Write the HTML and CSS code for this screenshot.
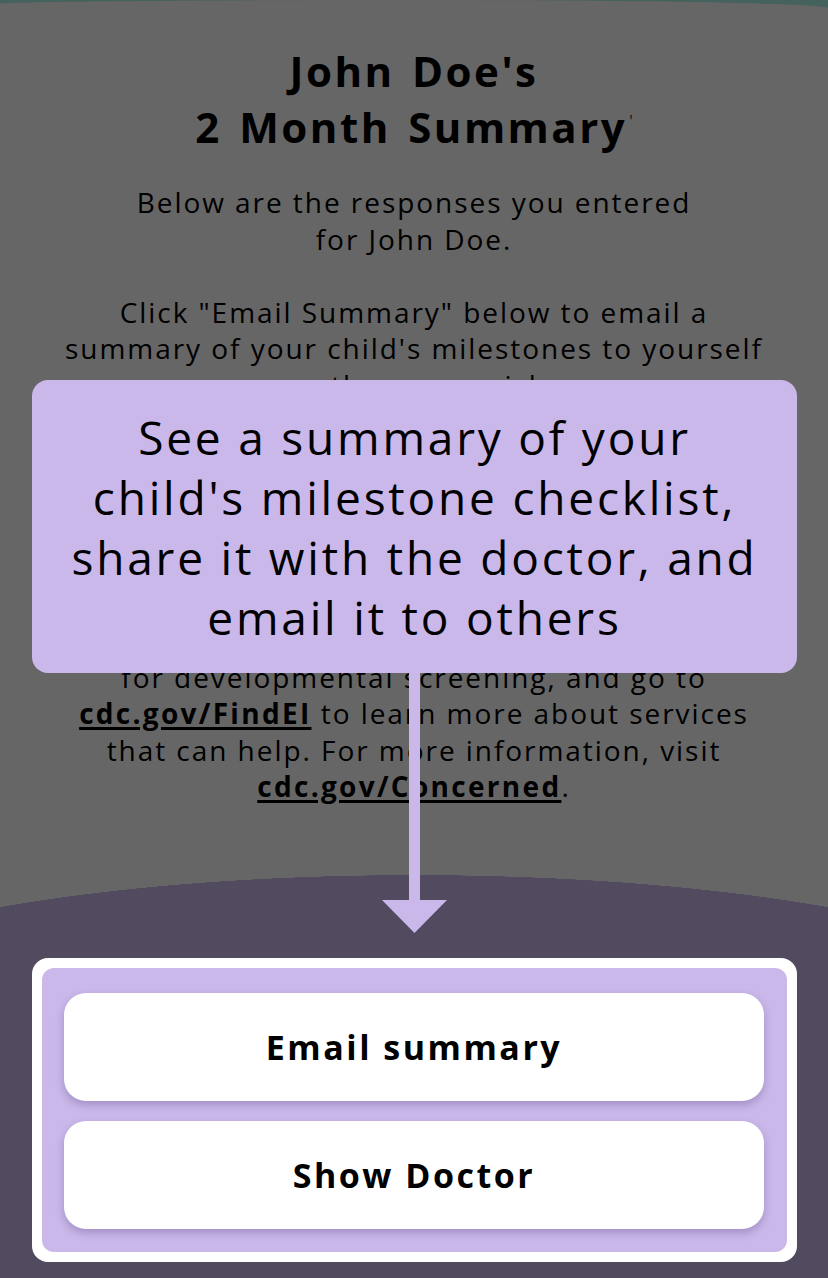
FILE: index.html
```html
<!DOCTYPE html>
<html lang="en">
<head>
<meta charset="utf-8">
<title>2 Month Summary</title>
<link rel="stylesheet" href="styles.css">
</head>
<body>
<div class="screen">
  <main class="page">
    <h1 class="title">John Doe's<br>2 Month Summary<span class="tick">'</span></h1>
    <p class="intro">
      Below are the responses you entered<br>for John Doe.<br><br>
      Click "Email Summary" below to email a<br>summary of your child's milestones to yourself<br>or others you wish.<br><br>
      Click "Show Doctor" to display a summary<br>of your child's milestones to share with<br>your child's doctor.<br><br>
      If you or the doctor are concerned, act<br>early! Talk with your child's doctor, ask<br>for developmental screening, and go to<br>
      <a class="link" href="#">cdc.gov/FindEI</a> to learn more about services<br>that can help. For more information, visit<br><a class="link" href="#">cdc.gov/Concerned</a>.
    </p>
  </main>
  <section class="band">
    <div class="frame">
      <div class="frame-inner">
        <button class="btn">Email summary</button>
        <button class="btn">Show Doctor</button>
      </div>
    </div>
  </section>

  <div class="overlay"></div>
  <div class="tip">
    <p class="tip-text">See a summary of your<br>child's milestone checklist,<br>share it with the doctor, and<br>email it to others</p>
  </div>
  <svg class="arrow" width="66" height="260" viewBox="0 0 66 260" aria-hidden="true">
    <rect x="27" y="0" width="11" height="230" fill="#cab8ea"/>
    <polygon points="0,227 65,227 32.5,260" fill="#cab8ea"/>
  </svg>
</div>
</body>
</html>
```

FILE: styles.css
```css
* { box-sizing: border-box; }
html, body { margin: 0; padding: 0; }
body {
  width: 828px;
  height: 1278px;
  overflow: hidden;
  font-family: "Open Sans", "Noto Sans", sans-serif;
  color: #000;
  background: #aff5e6;
}
.screen {
  position: relative;
  width: 828px;
  height: 1278px;
  overflow: hidden;
}
.page {
  background: #fff;
  border-top-left-radius: 414px 4px;
  border-top-right-radius: 414px 8px;
  padding-top: 43px;
  height: 875px;
}
.title {
  margin: 0;
  font-size: 42px;
  line-height: 56px;
  font-weight: 700;
  text-align: center;
  letter-spacing: 2.5px;
  word-spacing: 4px;
}
.tick {
  display: inline-block;
  line-height: 0;
  font-size: 16px;
  font-weight: 400;
  letter-spacing: 0;
  transform: translateY(-16px);
  margin-left: 2px;
  color: #333;
}
.intro {
  margin: 29px 0 0;
  font-size: 28px;
  line-height: 36.5px;
  text-align: center;
  white-space: nowrap;
  letter-spacing: 1.95px;
}
.link {
  color: #000;
  font-weight: 700;
  letter-spacing: 2.3px;
  text-decoration: underline;
  text-decoration-thickness: 2.5px;
  text-underline-offset: 3px;
}
.band {
  height: 403px;
  padding-top: 83px;
  background:
    radial-gradient(650px 140px at 50% 140px, #cdb9eb calc(100% - 1px), rgba(205,185,235,0) 100%) 0 0 / 100% 140px no-repeat,
    linear-gradient(#cdb9eb, #cdb9eb) 0 140px / 100% 100% no-repeat,
    #fff;
}
.frame {
  position: relative;
  z-index: 2;
  margin: 0 31px 0 32px;
  padding: 10px;
  background: #fff;
  border-radius: 16px;
}
.frame-inner {
  background: #cab8ea;
  border-radius: 12px;
  padding: 25px 23px 23px 22px;
  display: flex;
  flex-direction: column;
  gap: 20px;
}
.btn {
  height: 108px;
  border: 0;
  border-radius: 22px;
  background: #fff;
  box-shadow: 0 4px 8px rgba(60, 40, 100, 0.28);
  font-family: "Open Sans", "Noto Sans", sans-serif;
  font-size: 34px;
  font-weight: 700;
  color: #000;
  letter-spacing: 2.5px;
}
.overlay {
  position: absolute;
  inset: 0;
  background: rgba(0, 0, 0, 0.6);
  z-index: 1;
}
.tip {
  position: absolute;
  z-index: 3;
  left: 32px;
  top: 380px;
  width: 765px;
  height: 293px;
  background: #cab8ea;
  border-radius: 16px;
  display: flex;
  align-items: center;
  justify-content: center;
}
.tip-text {
  margin: 0;
  font-size: 46px;
  line-height: 60px;
  text-align: center;
  color: #000;
  white-space: nowrap;
  letter-spacing: 2.8px;
}
.arrow {
  position: absolute;
  z-index: 3;
  left: 382px;
  top: 673px;
}
```
